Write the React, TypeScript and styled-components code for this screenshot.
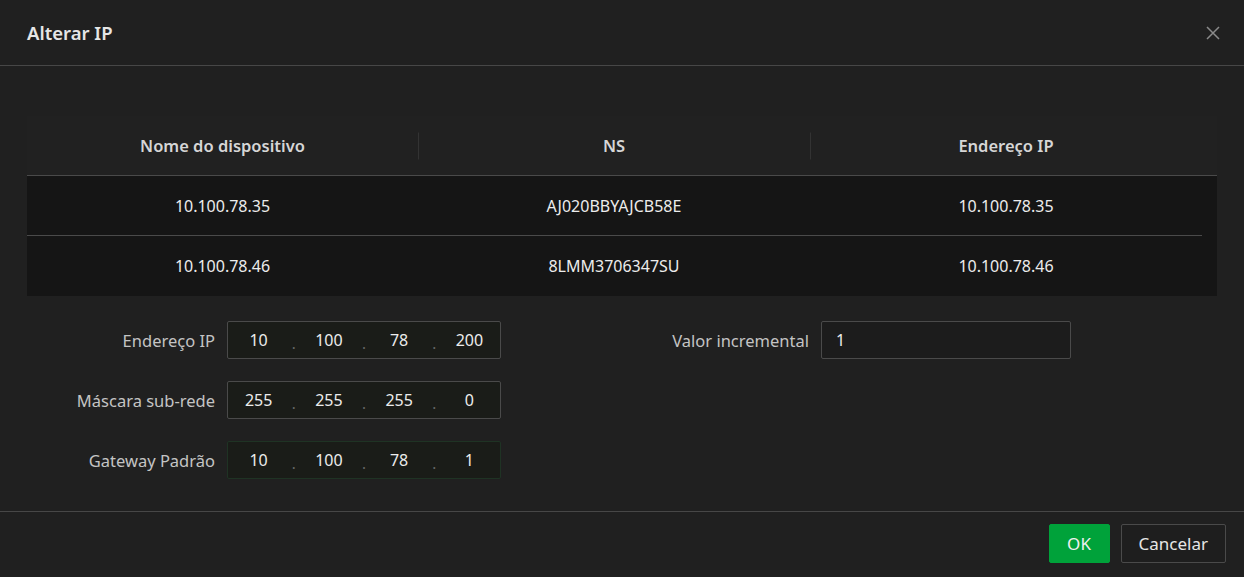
import React from 'react';
import styled, { createGlobalStyle } from 'styled-components';

type Device = { name: string; sn: string; ip: string };

const DEVICES: Device[] = [
  { name: '10.100.78.35', sn: 'AJ020BBYAJCB58E', ip: '10.100.78.35' },
  { name: '10.100.78.46', sn: '8LMM3706347SU', ip: '10.100.78.46' },
];

const FIELDS: { label: string; octets: string[]; active?: boolean }[] = [
  { label: 'Endereço IP', octets: ['10', '100', '78', '200'] },
  { label: 'Máscara sub-rede', octets: ['255', '255', '255', '0'] },
  { label: 'Gateway Padrão', octets: ['10', '100', '78', '1'], active: true },
];

const GlobalStyle = createGlobalStyle`
  html, body {
    margin: 0;
    padding: 0;
    background: #202020;
  }
  body {
    font-family: "Noto Sans", "Open Sans", Arial, sans-serif;
    color: #e0e0e0;
  }
  * { box-sizing: border-box; }
`;

const App = (): JSX.Element => {
  return (
    <>
      <GlobalStyle />
      <Dialog>
        <Header>
          <Title>Alterar IP</Title>
          <CloseButton aria-label="close">
            <svg width="14" height="14" viewBox="0 0 14 14">
              <path d="M1 1 L13 13 M13 1 L1 13" stroke="#8a8a8a" strokeWidth="1.5" fill="none" />
            </svg>
          </CloseButton>
        </Header>

        <Body>
          <Table>
            <HeadRow>
              <HeadCell>Nome do dispositivo</HeadCell>
              <HeadCell divider>NS</HeadCell>
              <HeadCell divider>Endereço IP</HeadCell>
              <Gutter />
            </HeadRow>
            {DEVICES.map((d, i) => (
              <Row key={d.sn} last={i === DEVICES.length - 1}>
                <Cell>{d.name}</Cell>
                <Cell>{d.sn}</Cell>
                <Cell>{d.ip}</Cell>
              </Row>
            ))}
          </Table>

          <Form>
            <Column>
              {FIELDS.map((f) => (
                <FieldRow key={f.label}>
                  <Label width={188}>{f.label}</Label>
                  <IpBox active={f.active}>
                    {f.octets.map((o, i) => (
                      <React.Fragment key={i}>
                        {i > 0 && <Dot>.</Dot>}
                        <Octet>{o}</Octet>
                      </React.Fragment>
                    ))}
                  </IpBox>
                </FieldRow>
              ))}
            </Column>
            <Column>
              <FieldRow>
                <Label width={308}>Valor incremental</Label>
                <TextBox>1</TextBox>
              </FieldRow>
            </Column>
          </Form>
        </Body>

        <Footer>
          <PrimaryButton>OK</PrimaryButton>
          <Button>Cancelar</Button>
        </Footer>
      </Dialog>
    </>
  );
};

export default App;

const Dialog = styled.div`
  width: 1244px;
  height: 577px;
  display: flex;
  flex-direction: column;
  background: #202020;
`;

const Header = styled.div`
  height: 66px;
  display: flex;
  align-items: center;
  justify-content: space-between;
  padding: 0 24px 0 27px;
  border-bottom: 1px solid #474747;
`;

const Title = styled.h1`
  margin: 0;
  font-size: 18.5px;
  font-weight: 600;
  color: #e6e6e6;
`;

const CloseButton = styled.button`
  display: flex;
  background: none;
  border: none;
  padding: 0;
  cursor: pointer;
`;

const Body = styled.div`
  flex: 1;
  padding: 50px 27px 0;
`;

const Table = styled.div`
  width: 1190px;
  background: #151515;
`;

const HeadRow = styled.div`
  display: grid;
  grid-template-columns: 391px 392px 392px 15px;
  height: 60px;
  align-items: center;
  background: #212121;
  border-bottom: 1px solid #4a4a4a;
`;

const HeadCell = styled.div<{ divider?: boolean }>`
  position: relative;
  text-align: center;
  font-size: 16.5px;
  font-weight: 600;
  color: #d6d6d6;
  &::before {
    content: '';
    display: ${({ divider }) => (divider ? 'block' : 'none')};
    position: absolute;
    left: 0;
    top: 50%;
    width: 1px;
    height: 27px;
    transform: translateY(-50%);
    background: #333333;
  }
`;

const Gutter = styled.div``;

const Row = styled.div<{ last?: boolean }>`
  display: grid;
  grid-template-columns: 391px 392px 392px;
  width: 1175px;
  height: 60px;
  align-items: center;
  border-bottom: 1px solid ${({ last }) => (last ? 'transparent' : '#4a4a4a')};
`;

const Cell = styled.div`
  text-align: center;
  font-size: 16px;
  color: #ececec;
`;

const Form = styled.div`
  display: flex;
  margin-top: 25px;
`;

const Column = styled.div`
  display: flex;
  flex-direction: column;
  gap: 22px;
`;

const FieldRow = styled.div`
  display: flex;
  align-items: center;
  gap: 12px;
`;

const Label = styled.div<{ width: number }>`
  width: ${({ width }) => width}px;
  text-align: right;
  font-size: 16.5px;
  color: #c4c4c4;
`;

const IpBox = styled.div<{ active?: boolean }>`
  width: 274px;
  height: 38px;
  display: flex;
  align-items: center;
  background: #1a1c18;
  border: 1px solid ${({ active }) => (active ? '#1f3324' : '#4a4a4a')};
  border-radius: 2px;
`;

const Octet = styled.div`
  flex: 1;
  text-align: center;
  font-size: 16px;
  color: #ececec;
`;

const Dot = styled.span`
  width: 9px;
  text-align: center;
  font-size: 15px;
  color: #6a6a6a;
  padding-top: 5px;
`;

const TextBox = styled.div`
  width: 250px;
  height: 38px;
  display: flex;
  align-items: center;
  padding: 0 14px;
  background: #1c1c1c;
  border: 1px solid #4a4a4a;
  border-radius: 2px;
  font-size: 16px;
  color: #ececec;
`;

const Footer = styled.div`
  height: 66px;
  display: flex;
  justify-content: flex-end;
  align-items: center;
  gap: 11px;
  padding: 0 18px 2px 0;
  border-top: 1px solid #474747;
`;

const Button = styled.button`
  height: 39px;
  padding: 0 17px;
  font-family: inherit;
  font-size: 17px;
  color: #e6e6e6;
  background: #1e1e1e;
  border: 1px solid #4a4a4a;
  border-radius: 2px;
  cursor: pointer;
`;

const PrimaryButton = styled(Button)`
  width: 61px;
  padding: 0;
  background: #00a23a;
  border-color: #00a23a;
  color: #f0f0f0;
`;
